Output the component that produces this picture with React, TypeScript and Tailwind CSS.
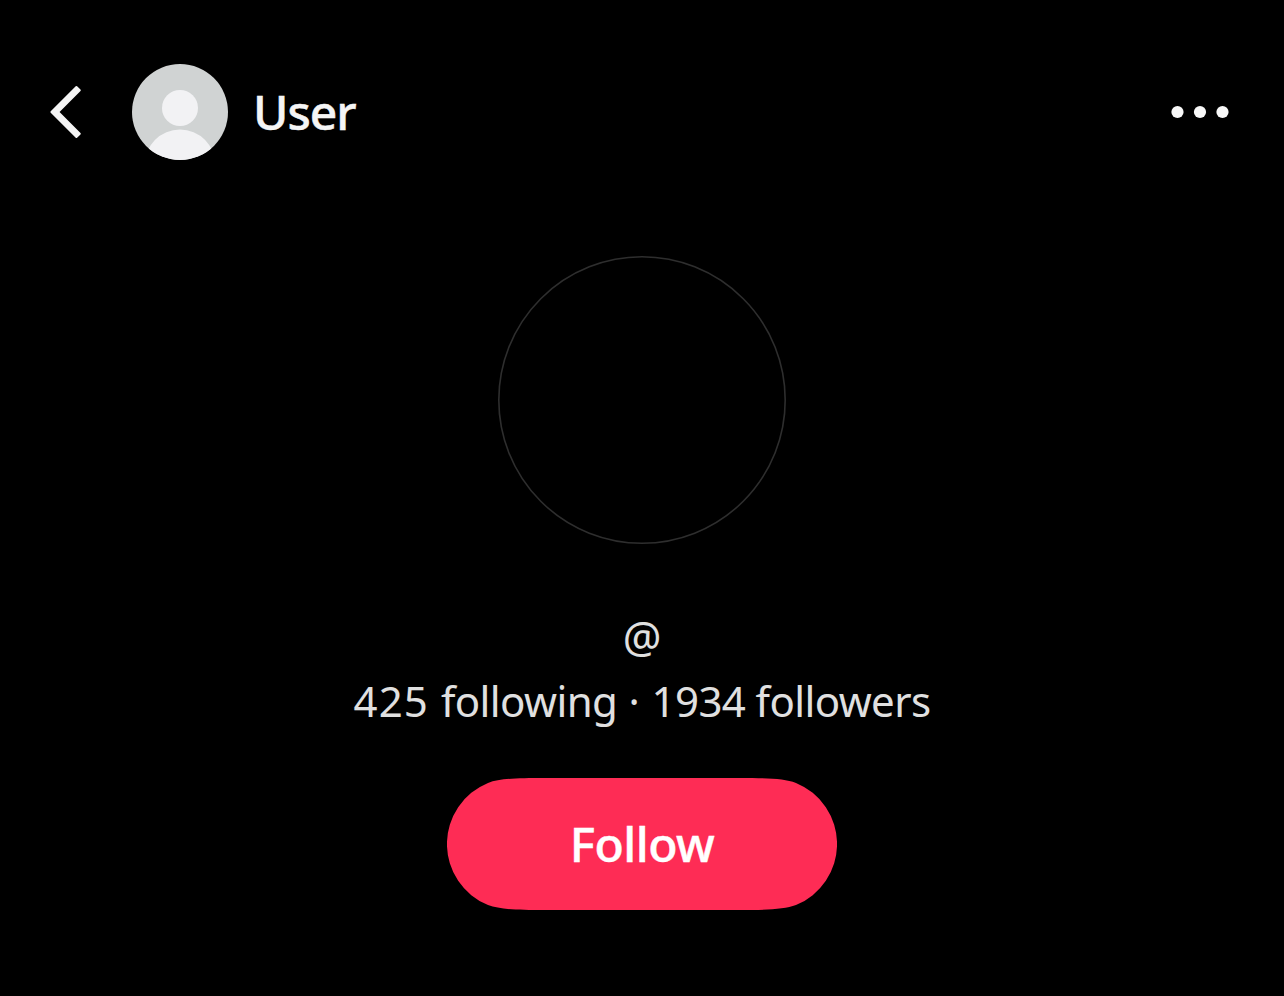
function BackIcon() {
  return (
    <svg width="36" height="56" viewBox="0 0 36 56">
      <path
        d="M5.4 28 30.4 3 33.8 6.3 12.1 28 33.8 49.7 30.4 53Z"
        fill="#f5f5f5"
        stroke="#f5f5f5"
        strokeWidth="2"
        strokeLinejoin="round"
      />
    </svg>
  );
}

function MoreIcon() {
  return (
    <svg width="60" height="16" viewBox="0 0 60 16" fill="#f8f8f8">
      <circle cx="7.5" cy="8" r="6.1" />
      <circle cx="30" cy="8" r="6.1" />
      <circle cx="52.5" cy="8" r="6.1" />
    </svg>
  );
}

function Avatar() {
  return (
    <svg width="96" height="96" viewBox="0 0 96 96" className="rounded-full bg-[#d0d3d3]">
      <circle cx="48" cy="44" r="18" fill="#f2f2f4" />
      <circle cx="48" cy="101" r="35.5" fill="#f2f2f4" />
    </svg>
  );
}

export default function App() {
  return (
    <div className="flex h-[996px] w-[1284px] flex-col bg-black font-['Noto_Sans',sans-serif]">
      {/* Header */}
      <header className="mt-16 flex h-24 items-center pr-[54px] pl-[46px]">
        <button aria-label="Back">
          <BackIcon />
        </button>
        <div className="ml-[50px]">
          <Avatar />
        </div>
        <h1 className="ml-[25px] text-[48px] leading-[64px] font-medium tracking-[-1px] text-[#f5f5f5] [-webkit-text-stroke:0.5px]">
          User
        </h1>
        <button aria-label="More" className="ml-auto">
          <MoreIcon />
        </button>
      </header>

      {/* Profile */}
      <main className="flex flex-col items-center pt-24">
        <svg width="288" height="288" viewBox="0 0 288 288" fill="none">
          <circle cx="144" cy="144" r="143.2" stroke="#2e2e2e" strokeWidth="1.6" />
        </svg>
        <p className="mt-[61px] text-[43px] leading-[64px] text-[#e0e0e0]">@</p>
        <p className="text-[42px] leading-[64px] tracking-[-0.6px] whitespace-nowrap text-[#e0e0e0]">
          <span className="tracking-[1.1px]">425 </span>
          following
          <span className="tracking-[0.4px]"> · </span>
          <span>1934 </span>
          followers
        </p>
        <button className="relative mt-[45px] h-[132px] w-[390px] text-[48px] font-medium tracking-[-0.5px] text-white [-webkit-text-stroke:0.5px]">
          <svg className="absolute inset-0" width="390" height="132" viewBox="0 0 390 132" fill="#fe2c55">
            <path d="M98 0H292C320 0 337 .5 349 4.9A66 66 0 0 1 349 127.1C337 131.5 320 132 292 132H98C70 132 53 131.5 41 127.1A66 66 0 0 1 41 4.9C53 .5 70 0 98 0Z" />
          </svg>
          <span className="relative">Follow</span>
        </button>
      </main>
    </div>
  );
}
